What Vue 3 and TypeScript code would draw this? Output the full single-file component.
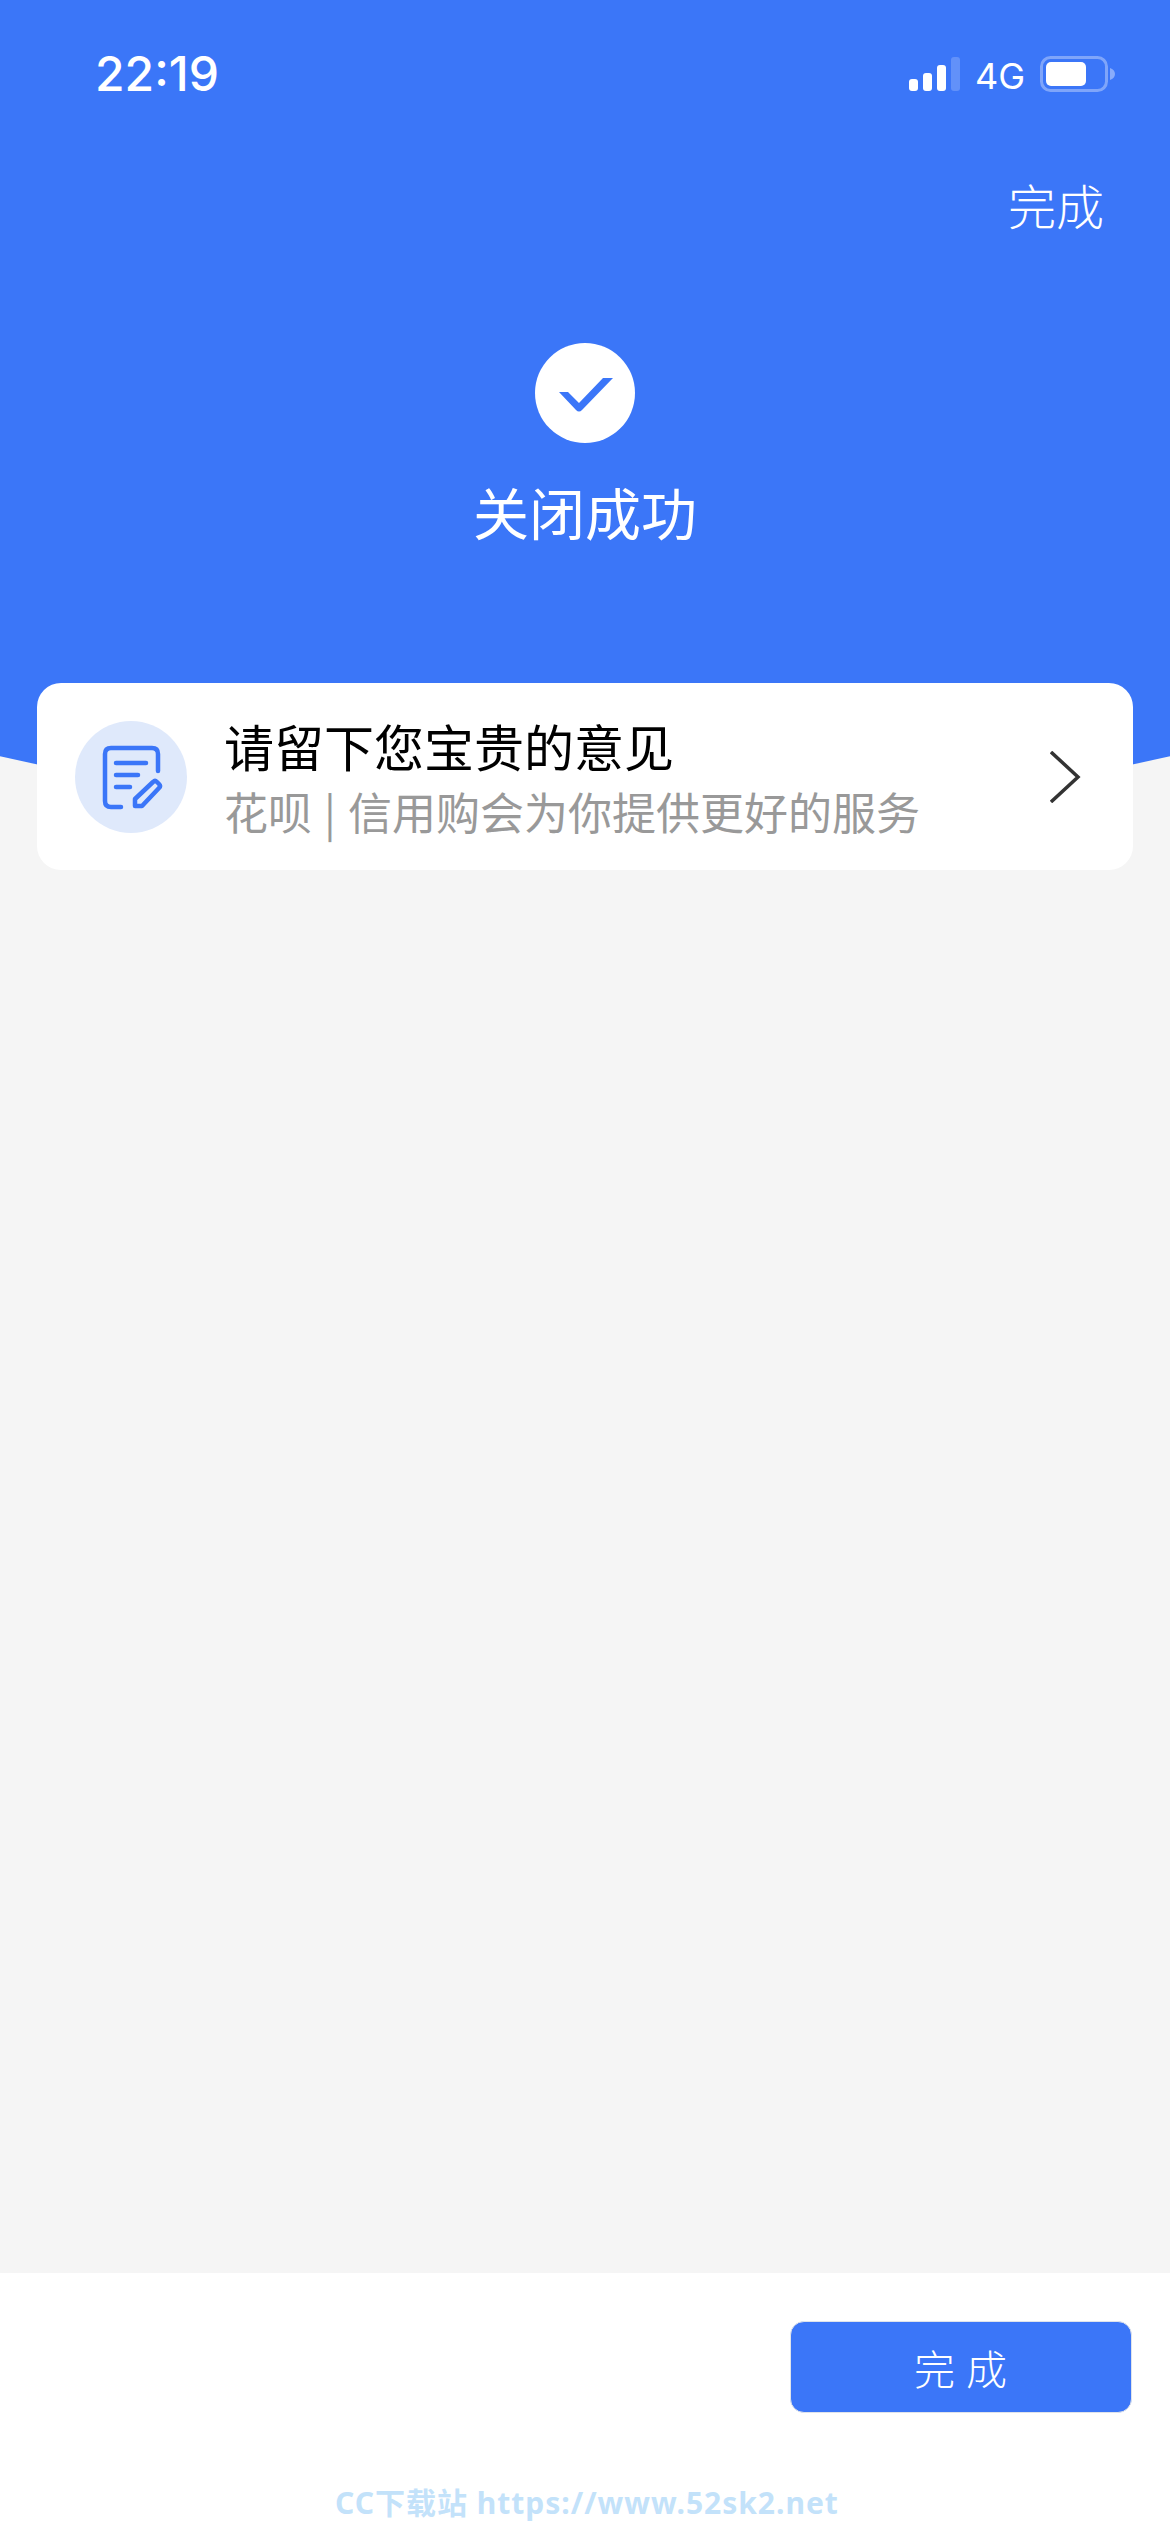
<template>
  <div class="page">
    <header class="hero">
      <div class="status-bar">
        <span class="time">22:19</span>
        <div class="status-right">
          <svg class="signal" width="51" height="34" viewBox="0 0 51 34">
            <rect x="0" y="22" width="9" height="12" rx="3" fill="#fff" />
            <rect x="14" y="16" width="9" height="18" rx="3" fill="#fff" />
            <rect x="28" y="8" width="9" height="26" rx="3" fill="#fff" />
            <rect x="42" y="0" width="9" height="34" rx="3" fill="#fff" fill-opacity="0.2" />
          </svg>
          <span class="network">4G</span>
          <svg class="battery" width="75" height="36" viewBox="0 0 75 36">
            <rect x="1.5" y="1.5" width="65" height="33" rx="9" fill="none" stroke="#fff" stroke-opacity="0.35" stroke-width="3" />
            <rect x="6" y="6" width="40" height="24" rx="5" fill="#fff" />
            <path d="M70 12 C73 13 75 15 75 18 C75 21 73 23 70 24 Z" fill="#fff" fill-opacity="0.4" />
          </svg>
        </div>
      </div>
      <div class="nav-row">
        <span class="nav-done">完成</span>
      </div>
      <div class="check-circle">
        <svg width="100" height="100" viewBox="0 0 100 100">
          <path d="M24 49 L33 49 L44 60 L68 35 L78 35 L47 67 Q44 70 41 67 Z" fill="#3b76f8" />
        </svg>
      </div>
      <h1 class="result-title">关闭成功</h1>
    </header>

    <main class="content">
      <div class="feedback-card">
        <div class="feedback-icon">
          <svg width="112" height="112" viewBox="0 0 112 112" fill="none" stroke="#3b76f8" stroke-width="4.5" stroke-linecap="round" stroke-linejoin="round">
            <path d="M46 86 H36 Q30 86 30 80 V33 Q30 27 36 27 H77 Q83 27 83 33 V50" />
            <path d="M41 42 H71" />
            <path d="M41 54 H63" />
            <path d="M41 66 H55" />
            <path d="M60 85 L60 78 L78 61 Q80 59 82 61 L84 63 Q86 65 84 67 L67 85 Z" />
          </svg>
        </div>
        <div class="feedback-text">
          <div class="feedback-title">请留下您宝贵的意见</div>
          <div class="feedback-sub">花呗<span class="sep">|</span>信用购会为你提供更好的服务</div>
        </div>
        <svg class="chevron" width="31" height="52" viewBox="0 0 31 52" fill="none" stroke="#333" stroke-width="3.5">
          <path d="M1 1 L28 26 L1 51" />
        </svg>
      </div>
    </main>

    <footer class="footer">
      <button class="done-btn" type="button">完 成</button>
      <div class="watermark">CC下载站 https://www.52sk2.net</div>
    </footer>
  </div>
</template>

<script setup lang="ts">
</script>

<style>
body {
  margin: 0;
}
</style>

<style scoped>
.page {
  display: flex;
  flex-direction: column;
  height: 2532px;
  background: #f5f5f5;
  font-family: "Noto Sans CJK SC", "Noto Sans", sans-serif;
}

.hero {
  height: 821px;
  flex-shrink: 0;
  background: #3b76f8;
  clip-path: circle(2680px at 50% -1859px);
  color: #fff;
  display: flex;
  flex-direction: column;
  align-items: center;
}

.status-bar {
  width: 100%;
  box-sizing: border-box;
  height: 92px;
  padding: 54px 55px 0 95px;
  display: flex;
  justify-content: space-between;
  align-items: flex-start;
}

.time {
  font-family: Inter, "Liberation Sans", sans-serif;
  font-size: 48px;
  font-weight: 500;
  line-height: 40px;
}

.status-right {
  display: flex;
  align-items: flex-start;
  margin-top: 2px;
}

.signal {
  margin-right: 15px;
  margin-top: 1px;
}

.network {
  font-family: Inter, "Liberation Sans", sans-serif;
  font-size: 36px;
  line-height: 34px;
  margin-top: 3px;
  margin-right: 15px;
}

.nav-row {
  width: 100%;
  box-sizing: border-box;
  display: flex;
  justify-content: flex-end;
  padding: 82px 66px 0 0;
}

.nav-done {
  font-size: 48px;
  font-weight: 300;
  line-height: 60px;
}

.check-circle {
  width: 100px;
  height: 100px;
  margin-top: 109px;
  border-radius: 50%;
  background: #fff;
}

.result-title {
  margin: 33px 0 0;
  font-size: 56px;
  font-weight: 400;
  line-height: 70px;
}

.content {
  flex: 1;
}

.feedback-card {
  position: relative;
  z-index: 1;
  margin: -138px 37px 0;
  height: 187px;
  box-sizing: border-box;
  padding: 0 52px 0 38px;
  background: #fff;
  border-radius: 24px;
  display: flex;
  align-items: center;
}

.feedback-icon {
  width: 112px;
  height: 112px;
  flex-shrink: 0;
  border-radius: 50%;
  background: #dfe9fb;
}

.feedback-text {
  flex: 1;
  margin-left: 37px;
}

.feedback-title {
  font-size: 50px;
  line-height: 72px;
  margin-top: -4px;
  color: #000;
}

.feedback-sub {
  font-size: 44px;
  line-height: 60px;
  color: #999;
}

.sep {
  margin: 0 12px;
}

.chevron {
  flex-shrink: 0;
}

.footer {
  height: 259px;
  flex-shrink: 0;
  box-sizing: border-box;
  background: #fff;
  padding-top: 48px;
  display: flex;
  flex-direction: column;
}

.done-btn {
  align-self: flex-end;
  margin-right: 38px;
  width: 342px;
  height: 92px;
  border: 1px solid #dfe3ea;
  border-radius: 14px;
  background: #3b76f8;
  color: #fff;
  font-family: inherit;
  font-size: 41px;
  font-weight: 300;
  letter-spacing: 1px;
  padding: 0;
}

.watermark {
  margin-top: 72px;
  padding-left: 335px;
  font-family: "Noto Sans", "Noto Sans CJK SC", sans-serif;
  font-size: 30px;
  font-weight: 700;
  letter-spacing: 1px;
  line-height: 36px;
  color: #c3e2fa;
  white-space: nowrap;
}
</style>
